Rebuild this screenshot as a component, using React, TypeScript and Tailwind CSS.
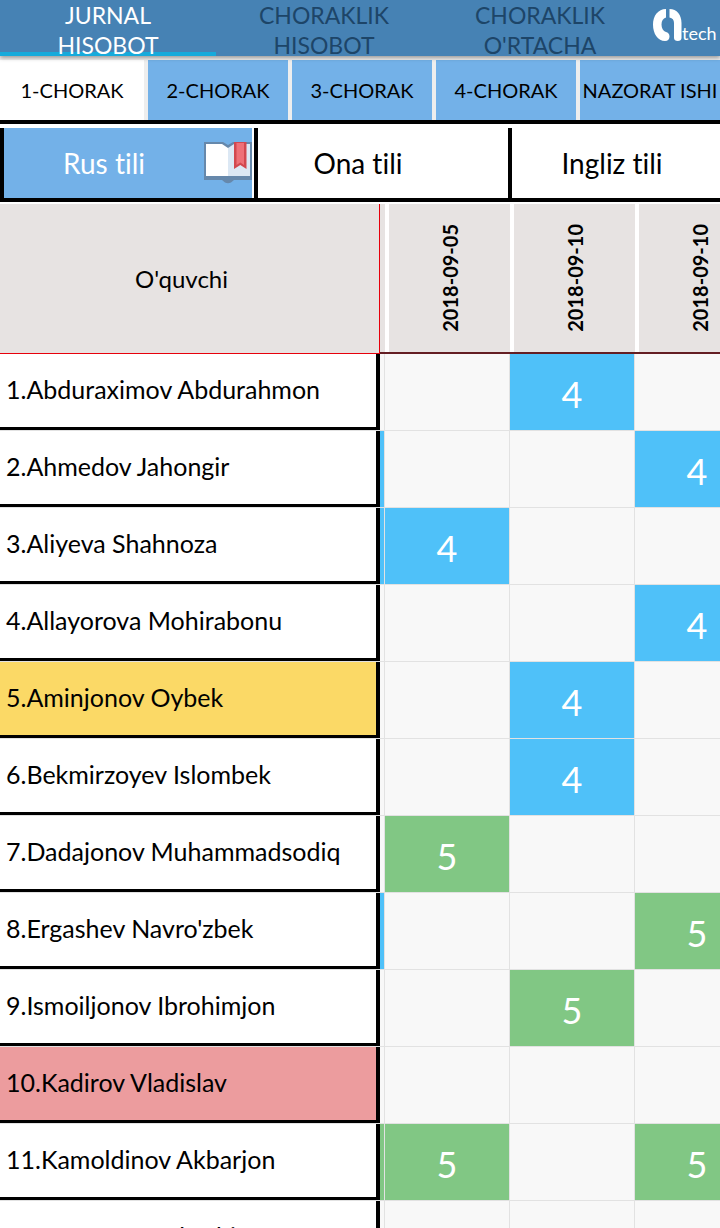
const reportTabs = [
  { top: "JURNAL", bottom: "HISOBOT", active: true },
  { top: "CHORAKLIK", bottom: "HISOBOT", active: false },
  { top: "CHORAKLIK", bottom: "O'RTACHA", active: false },
];

const quarters = ["1-CHORAK", "2-CHORAK", "3-CHORAK", "4-CHORAK", "NAZORAT ISHI"];
const subjects = ["Rus tili", "Ona tili", "Ingliz tili"];
const dates = ["2018-09-05", "2018-09-10", "2018-09-10"];

type Mark = 4 | 5 | null;
type Student = { name: string; marks: Mark[]; tone?: "yellow" | "red" };

// marks[0] belongs to the column that is scrolled almost out of view.
const students: Student[] = [
  { name: "Abduraximov Abdurahmon", marks: [null, null, 4, null] },
  { name: "Ahmedov Jahongir", marks: [4, null, null, 4] },
  { name: "Aliyeva Shahnoza", marks: [4, 4, null, null] },
  { name: "Allayorova Mohirabonu", marks: [null, null, null, 4] },
  { name: "Aminjonov Oybek", marks: [null, null, 4, null], tone: "yellow" },
  { name: "Bekmirzoyev Islombek", marks: [null, null, 4, null] },
  { name: "Dadajonov Muhammadsodiq", marks: [null, 5, null, null] },
  { name: "Ergashev Navro'zbek", marks: [4, null, null, 5] },
  { name: "Ismoiljonov Ibrohimjon", marks: [null, null, 5, null] },
  { name: "Kadirov Vladislav", marks: [null, null, null, null], tone: "red" },
  { name: "Kamoldinov Akbarjon", marks: [5, 5, null, 5] },
  { name: "Muzaffarov Ibrohim", marks: [null, null, null, null] },
];

const markColor = (mark: Mark) =>
  mark === 4 ? "bg-[#4fc1f9]" : mark === 5 ? "bg-[#81c784]" : "bg-[#f8f8f8]";

const nameColor = (tone?: "yellow" | "red") =>
  tone === "yellow" ? "bg-[#fbd966]" : tone === "red" ? "bg-[#ec9c9e]" : "bg-white";

function Logo() {
  return (
    <svg viewBox="0 0 72 44" className="h-11 w-full" role="img" aria-label="atech">
      <path
        d="M18 9C10 9 5 16 5 24.500C5 34 10 41 17 41C20 41 21.500 39 21.500 36.500C21.500 34 20 32.500 18 32C15 31 13.500 28 13.500 24.500C13.500 21 15 18.500 18 17.500Z"
        fill="#fff"
      />
      <path
        d="M21.500 9C29 9 33.500 15 33.500 23V38C33.500 40 32 41 29.800 41C27.500 41 26 40 26 38V23C26 20 24.500 18 21.500 17.500Z"
        fill="#fff"
      />
      <text x="34" y="40" fill="#fff" fontSize="18" fontFamily="Lato, sans-serif">
        tech
      </text>
    </svg>
  );
}

function BookIcon() {
  return (
    <svg viewBox="0 0 48 44" className="h-11 w-12 shrink-0" aria-hidden="true">
      <path d="M0 1h19l5 3 5-3h19v38H30l-3 2.500q-3 1.500-6 0L18 39H0z" fill="#6688ab" />
      <path d="M2 3h16l6 4v28H2z" fill="#fff" />
      <path d="M24 7l6-4h16v32H24z" fill="#dce8f4" />
      <path d="M30 1h12.500v27l-6.200-4-6.300 4z" fill="#d2484f" />
      <path d="M32.500 2h7.500v22l-3.700-2.500-3.800 2.500z" fill="#ee7077" />
    </svg>
  );
}

export default function App() {
  return (
    <div className="flex h-screen w-full flex-col overflow-hidden bg-white font-['Lato',sans-serif] text-black [font-variant-ligatures:none]">
      <header className="relative z-10 flex h-14 shrink-0 bg-[#4682b4] shadow-[0_2px_4px_rgba(0,0,0,0.35)]">
        <nav className="flex flex-[9]">
          {reportTabs.map((tab, i) => (
            <button
              key={i}
              className={`h-14 flex-1 border-b-4 text-[23px] leading-[30px] ${
                tab.active ? "border-[#16aadb] text-white" : "border-transparent text-[#1d4568]"
              }`}
            >
              <span className="flex h-[52px] flex-col items-center">
                <span>{tab.top}</span>
                <span>{tab.bottom}</span>
              </span>
            </button>
          ))}
        </nav>
        <div className="flex-1">
          <Logo />
        </div>
      </header>

      <nav className="grid h-[68px] shrink-0 grid-cols-5 border-b-4 border-black bg-[#eeeeee] pt-1">
        {quarters.map((quarter, i) => (
          <button
            key={quarter}
            className={`min-w-0 whitespace-nowrap text-xl ${
              i === 0 ? "bg-white" : "border-l-4 border-[#eeeeee] bg-[#73b1e8]"
            }`}
          >
            {quarter}
          </button>
        ))}
      </nav>

      <nav className="flex h-[78px] shrink-0 overflow-hidden border-b-4 border-black pt-1">
        {subjects.map((subject, i) => (
          <button
            key={subject}
            className={`flex w-[254px] shrink-0 items-center border-l-4 border-black pr-0.5 text-[28px] ${
              i === 0 ? "bg-[#73b1e8] bg-clip-content text-white" : "bg-white"
            }`}
          >
            <span className="flex-1 text-center">{subject}</span>
            {i === 0 ? <BookIcon /> : <span className="w-12" />}
          </button>
        ))}
      </nav>

      <main className="min-h-0 flex-1 overflow-hidden pt-0.5">
        <table className="w-[760px] table-fixed border-separate border-spacing-0">
          <colgroup>
            <col className="w-[380px]" />
            <col className="w-[5px]" />
            <col className="w-[125px]" />
            <col className="w-[125px]" />
            <col className="w-[125px]" />
          </colgroup>
          <thead>
            <tr className="h-[150px] bg-[#e7e3e2]">
              <th className="border-r border-b border-red-600 p-0 pr-4 text-2xl font-normal">O'quvchi</th>
              <th className="border-b-2 border-[#641e23] p-0" />
              {dates.map((date, i) => (
                <th key={i} className="border-b-2 border-[#641e23] p-0">
                  <div className="flex h-[148px] items-center justify-center border-l-4 border-white">
                    <span className="rotate-180 text-xl font-bold [writing-mode:vertical-rl]">{date}</span>
                  </div>
                </th>
              ))}
            </tr>
          </thead>
          <tbody>
            {students.map((student, row) => (
              <tr key={row}>
                <th scope="row" className="border-b border-[#e2e2e2] p-0 text-left font-normal">
                  <div
                    className={`flex h-[76px] items-center border-r-4 border-b-[3px] border-black pb-0.5 pl-1.5 text-[25px] whitespace-nowrap ${nameColor(student.tone)}`}
                  >
                    {row + 1}.{student.name}
                  </div>
                </th>
                {student.marks.map((mark, col) => (
                  <td
                    key={col}
                    className={`border-r border-b border-[#e2e2e2] p-0 pt-1 text-center text-4xl text-white ${markColor(mark)}`}
                  >
                    {col > 0 ? mark : null}
                  </td>
                ))}
              </tr>
            ))}
          </tbody>
        </table>
      </main>
    </div>
  );
}
